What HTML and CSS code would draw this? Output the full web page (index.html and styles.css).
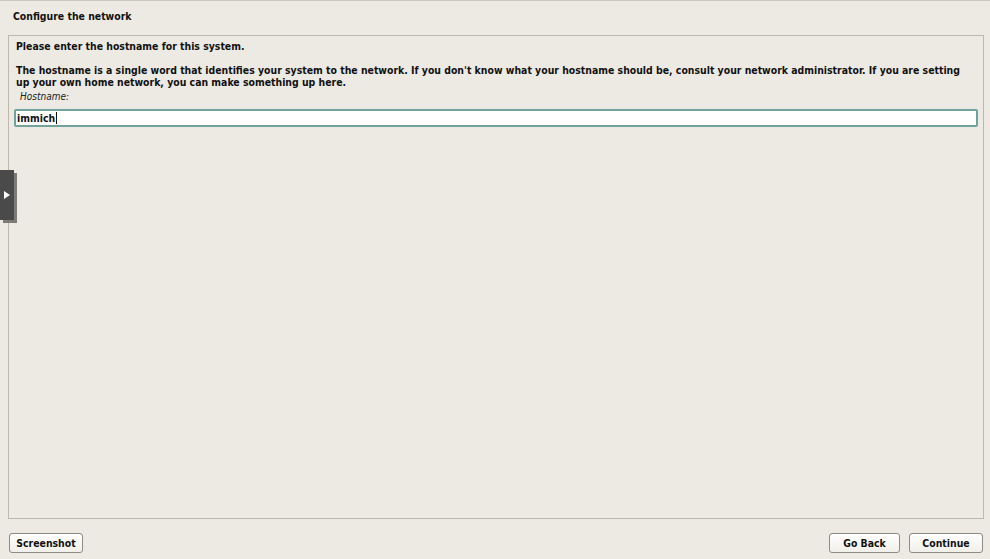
FILE: index.html
```html
<!DOCTYPE html>
<html>
<head>
<meta charset="utf-8">
<link rel="stylesheet" href="styles.css">
</head>
<body>
<div class="screen">
  <div class="title">Configure the network</div>
  <div class="panel">
    <p class="q">Please enter the hostname for this system.</p>
    <p class="desc">The hostname is a single word that identifies your system to the network. If you don't know what your hostname should be, consult your network administrator. If you are setting up your own home network, you can make something up here.</p>
    <div class="label">Hostname:</div>
    <div class="input">immich<span class="caret"></span></div>
  </div>
  <div class="buttons">
    <div class="btn shot">Screenshot</div>
    <div class="spacer"></div>
    <div class="btn back">Go Back</div>
    <div class="btn cont">Continue</div>
  </div>
  <div class="tab"><svg width="6" height="8" viewBox="0 0 6 8"><path d="M0 0 L6 4 L0 8 Z" fill="#fff"/></svg></div>
</div>
</body>
</html>
```
FILE: styles.css
```css
html, body {
  margin: 0;
  padding: 0;
  background: #edeae3;
}
.screen {
  position: relative;
  width: 990px;
  height: 559px;
  box-sizing: border-box;
  border-top: 1px solid #c9c9c2;
  font-family: "DejaVu Sans Condensed", "DejaVu Sans", sans-serif;
  font-size: 10.4px;
  font-weight: bold;
  color: #111;
  display: flex;
  flex-direction: column;
}
.title {
  padding: 9px 0 0 13px;
  height: 34px;
  box-sizing: border-box;
  line-height: 12px;
}
.panel {
  margin: 0 6px 0 8px;
  height: 484px;
  box-sizing: border-box;
  border: 1px solid #bdb8ae;
  padding: 4px 5px 0 5px;
}
.panel p {
  margin: 0;
  padding: 0 8px 0 2px;
  line-height: 12px;
}
.q {
  margin-bottom: 12px !important;
}
.label {
  font-weight: normal;
  font-style: italic;
  font-size: 10px;
  padding: 3px 0 0 6px;
  line-height: 12px;
  color: #222;
}
.input {
  margin-top: 6px;
  height: 18px;
  box-sizing: border-box;
  border: 2px solid #6fa39c;
  border-radius: 2px;
  background: #fff;
  padding: 0 0 0 1px;
  line-height: 13px;
  display: flex;
  align-items: center;
}
.caret {
  display: inline-block;
  width: 1px;
  height: 12px;
  background: #111;
  margin-left: 1px;
}
.buttons {
  display: flex;
  padding: 14px 7px 0 9px;
  gap: 9px;
}
.spacer { flex: 1; }
.btn {
  height: 20px;
  box-sizing: border-box;
  border: 1px solid #8f8b84;
  border-radius: 3px;
  background: linear-gradient(#ffffff, #f1efe9);
  line-height: 18px;
  text-align: center;
}
.shot { width: 74px; }
.back { width: 71px; }
.cont { width: 74px; }
.tab {
  position: absolute;
  left: 0;
  top: 169px;
  width: 14px;
  height: 50px;
  background: #4a4a4a;
  box-shadow: 3px 3px 0 #7d7b77;
  display: flex;
  align-items: center;
  justify-content: center;
}
```
